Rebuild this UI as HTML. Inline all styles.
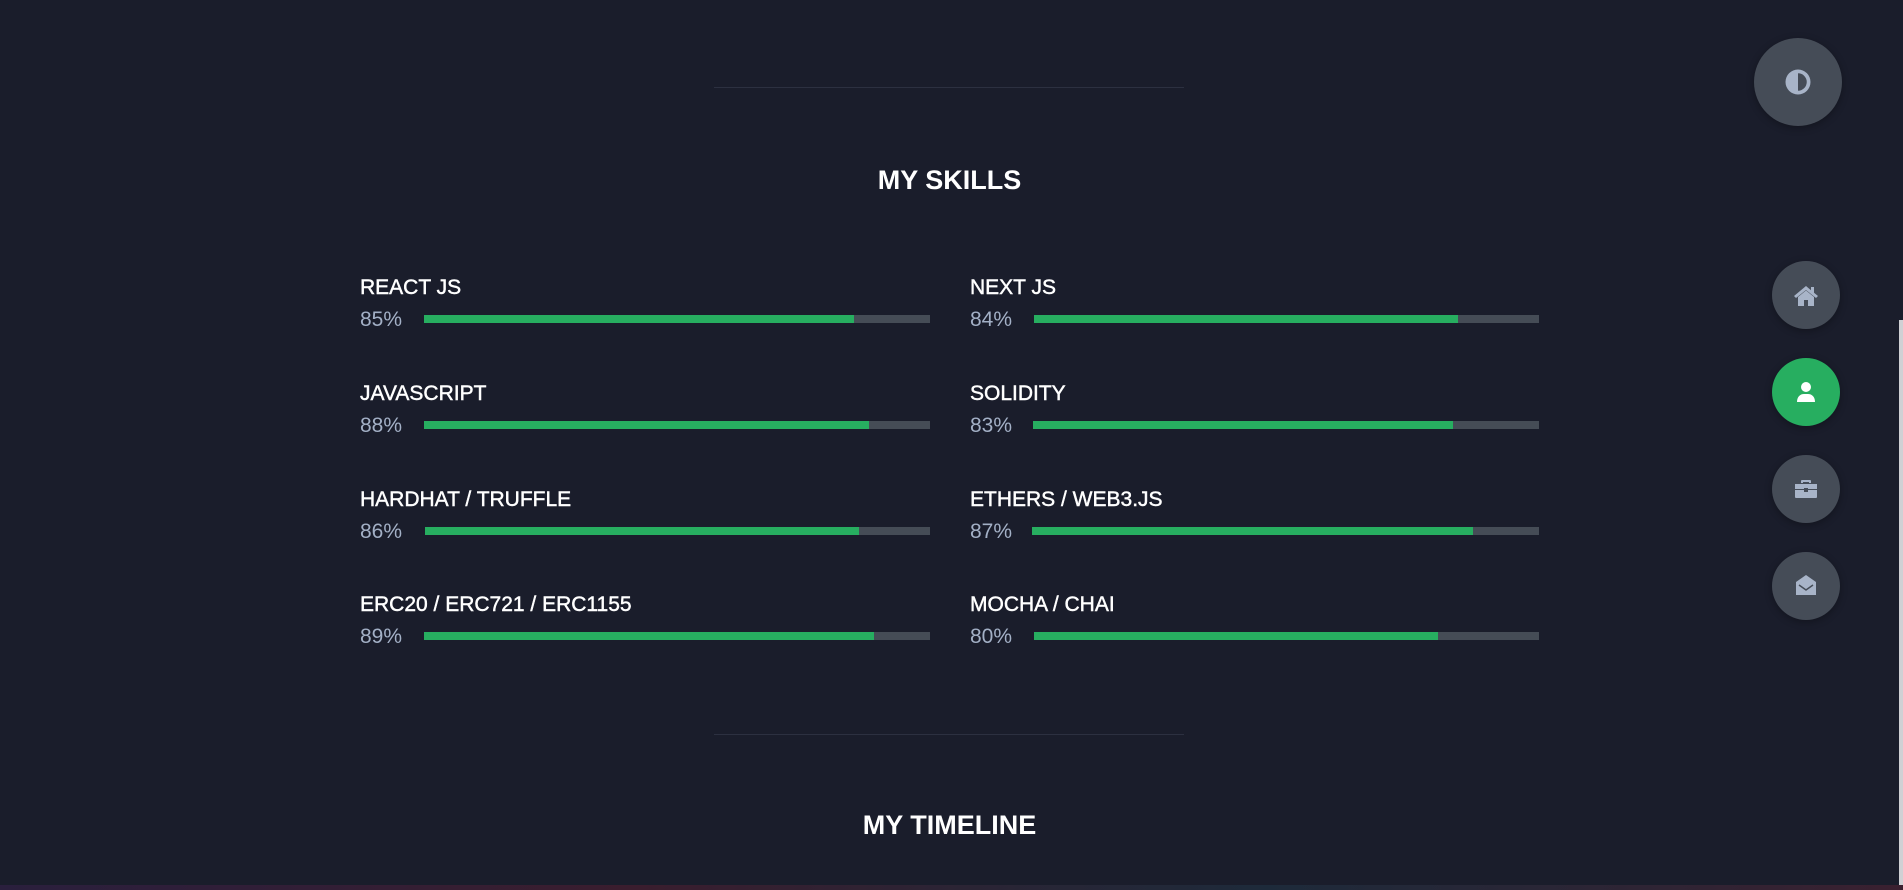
<!DOCTYPE html>
<html><head><meta charset="utf-8"><style>
html,body{margin:0;padding:0;}
body{width:1903px;height:890px;background:#1a1d2b;position:relative;overflow:hidden;font-family:"Liberation Sans",sans-serif;}
.line{position:absolute;left:714px;width:470px;height:1px;background:#2c3040;}
h2{position:absolute;left:0;width:1899px;text-align:center;margin:0;color:#fff;font-weight:bold;font-size:27px;}
.lbl{position:absolute;color:#fff;font-size:21px;-webkit-text-stroke:0.45px #fff;}
.pct{position:absolute;color:#a3b0c6;font-size:21px;}
.bar{position:absolute;height:8px;background:#454c56;}
.bar i{display:block;height:100%;background:#27ae60;}
.btn{position:absolute;border-radius:50%;background:#454c57;display:flex;align-items:center;justify-content:center;box-shadow:0 2px 8px rgba(0,0,0,.3);}
.btn svg{fill:#a8b4c8;}
</style></head><body>
<div class="line" style="top:87px"></div>
<h2 style="top:165px">MY SKILLS</h2>

<div class="lbl" style="left:360px;top:276px">REACT JS</div>
<div class="pct" style="left:360px;top:308px">85%</div>
<div class="bar" style="left:424px;width:506px;top:315px"><i style="width:85%"></i></div>
<div class="lbl" style="left:970px;top:276px">NEXT JS</div>
<div class="pct" style="left:970px;top:308px">84%</div>
<div class="bar" style="left:1034px;width:505px;top:315px"><i style="width:84%"></i></div>

<div class="lbl" style="left:360px;top:382px">JAVASCRIPT</div>
<div class="pct" style="left:360px;top:414px">88%</div>
<div class="bar" style="left:424px;width:506px;top:421px"><i style="width:88%"></i></div>
<div class="lbl" style="left:970px;top:382px">SOLIDITY</div>
<div class="pct" style="left:970px;top:414px">83%</div>
<div class="bar" style="left:1033px;width:506px;top:421px"><i style="width:83%"></i></div>

<div class="lbl" style="left:360px;top:488px">HARDHAT / TRUFFLE</div>
<div class="pct" style="left:360px;top:520px">86%</div>
<div class="bar" style="left:425px;width:505px;top:527px"><i style="width:86%"></i></div>
<div class="lbl" style="left:970px;top:488px">ETHERS / WEB3.JS</div>
<div class="pct" style="left:970px;top:520px">87%</div>
<div class="bar" style="left:1032px;width:507px;top:527px"><i style="width:87%"></i></div>

<div class="lbl" style="left:360px;top:593px">ERC20 / ERC721 / ERC1155</div>
<div class="pct" style="left:360px;top:625px">89%</div>
<div class="bar" style="left:424px;width:506px;top:632px"><i style="width:89%"></i></div>
<div class="lbl" style="left:970px;top:593px">MOCHA / CHAI</div>
<div class="pct" style="left:970px;top:625px">80%</div>
<div class="bar" style="left:1034px;width:505px;top:632px"><i style="width:80%"></i></div>

<div class="line" style="top:734px"></div>
<h2 style="top:810px">MY TIMELINE</h2>

<div class="btn" style="left:1754px;top:38px;width:88px;height:88px"><svg width="30" height="30" viewBox="0 0 24 24"><path d="M12 2a10 10 0 1 0 0 20a10 10 0 0 0 0-20zm0 3a7 7 0 0 1 0 14z" fill-rule="evenodd"/></svg></div>
<div class="btn" style="left:1772px;top:261px;width:68px;height:68px"><svg width="26" height="24" viewBox="0 0 26 24"><path d="M13 3L1 13l2 2 10-8 10 8 2-2-4-3.3V4h-3v3.2z M5 14v9h6v-6h4v6h6v-9l-8-6.5z"/></svg></div>
<div class="btn" style="left:1772px;top:358px;width:68px;height:68px;background:#27ae60"><svg width="24" height="24" viewBox="0 0 24 24" style="fill:#fff"><circle cx="12" cy="7" r="5"/><path d="M3 22c0-5 3-8 7-8h4c4 0 7 3 7 8z"/></svg></div>
<div class="btn" style="left:1772px;top:455px;width:68px;height:68px"><svg width="26" height="24" viewBox="0 0 26 24"><path d="M9 3h8a1 1 0 0 1 1 1v2h-2V5h-6v1H8V4a1 1 0 0 1 1-1z M2 7h22v5H15v-1h-4v1H2z M2 13h9v2h4v-2h9v7a1 1 0 0 1-1 1H3a1 1 0 0 1-1-1z"/></svg></div>
<div class="btn" style="left:1772px;top:552px;width:68px;height:68px"><svg width="26" height="26" viewBox="0 0 26 26"><path d="M13 2L3 9v13h20V9z" /><path d="M6 12l7 5 7-5" stroke="#454c57" stroke-width="1.5" fill="none"/></svg></div>

<div style="position:absolute;right:0;top:320px;width:4px;height:565px;background:#cfd0d4"></div>
<div style="position:absolute;left:0;bottom:0;width:1903px;height:5px;background:linear-gradient(90deg,#2a1f3d,#3a1d2e,#1d2a3a,#3a2030)"></div>
</body></html>
